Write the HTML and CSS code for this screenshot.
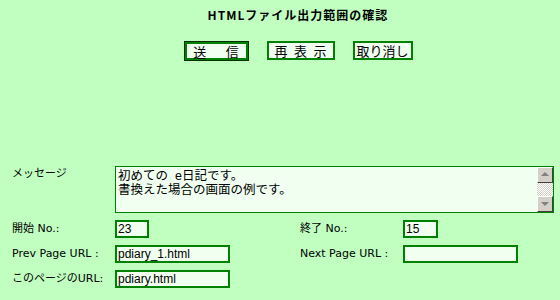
FILE: index.html
```html
<!DOCTYPE html>
<html lang="ja">
  <head>
    <meta charset="UTF-8" />
    <title>HTMLファイル出力範囲の確認</title>
    <link rel="stylesheet" href="styles.css">
  </head>
  <body>
    <div class="page">
      <h1 class="title">HTMLファイル出力範囲の確認</h1>

      <div class="buttons">
        <button class="btn btn-send">送&emsp;&ensp;信</button>
        <button class="btn btn-redraw">再&ensp;表&ensp;示</button>
        <button class="btn btn-cancel">取り消し</button>
      </div>
    </div>

    <form class="form">
      <label class="label label-top">メッセージ</label>
      <div class="memo">
        <textarea class="memo-text">初めての  e日記です。
書換えた場合の画面の例です。</textarea>
        <div class="scrollbar">
          <span class="sb-btn sb-up"></span>
          <span class="sb-track"></span>
          <span class="sb-btn sb-down"></span>
        </div>
      </div>

      <label class="label">開始 No.:</label>
      <div><input class="field field-num" value="23"></div>
      <label class="label">終了 No.:</label>
      <div><input class="field field-num2" value="15"></div>

      <label class="label">Prev Page URL :</label>
      <div><input class="field field-url" value="pdiary_1.html"></div>
      <label class="label">Next Page URL :</label>
      <div><input class="field field-url" value=""></div>

      <label class="label">このページのURL:</label>
      <div><input class="field field-url" value="pdiary.html"></div>
    </form>
  </body>
</html>
```

FILE: styles.css
```css
body {
  margin: 0;
  background: #c0ffc0;
  font-family: "Noto Sans CJK JP", "DejaVu Sans", sans-serif;
  font-size: 12px;
  color: #000;
}

.page {
  padding-left: 36px;
  text-align: center;
}

.title {
  margin: 0;
  padding-top: 6px;
  font-size: 12px;
  font-weight: bold;
  letter-spacing: 1px;
  line-height: 18px;
}

.buttons {
  display: flex;
  justify-content: center;
  align-items: flex-start;
  gap: 18px;
  margin-top: 17px;
}

.btn {
  height: 19px;
  padding: 0;
  background: #f0fff0;
  border: 2px solid #008000;
  font-family: inherit;
  font-size: 13px;
  line-height: 15px;
  color: #000;
}

.btn-send {
  width: 65px;
  height: 20px;
  border: 1px solid #003000;
  box-shadow: inset 0 0 0 2px #008000;
}

.btn-redraw {
  width: 68px;
}

.btn-cancel {
  width: 60px;
}

.form {
  display: grid;
  grid-template-columns: 103px 185px 103px 151px;
  row-gap: 6px;
  padding-left: 12px;
  margin-top: 105px;
}

.label {
  display: flex;
  align-items: center;
  font-family: "DejaVu Sans", "Noto Sans CJK JP", sans-serif;
  font-size: 11px;
  line-height: 14px;
}

.label-top {
  align-items: flex-start;
  padding-top: 1px;
}

.memo {
  grid-column: 2 / 5;
  display: flex;
  height: 47px;
  box-sizing: border-box;
  border: 1px solid #008000;
  background: #f0fff0;
}

.memo-text {
  flex: 1;
  border: none;
  outline: none;
  resize: none;
  margin: 0;
  padding: 2px 2px;
  background: transparent;
  font-family: "Liberation Sans", "Noto Sans CJK JP", sans-serif;
  font-size: 12.5px;
  line-height: 14px;
  overflow: hidden;
  color: #000;
}

.scrollbar {
  display: flex;
  flex-direction: column;
  width: 16px;
}

.sb-btn {
  position: relative;
  height: 16px;
  box-sizing: border-box;
  background: #d4d0c8;
  border: 1px solid;
  border-color: #fff #404040 #404040 #fff;
}

.sb-btn::after {
  content: "";
  position: absolute;
  left: 3px;
  top: 4px;
  border-left: 4px solid transparent;
  border-right: 4px solid transparent;
}

.sb-up::after {
  border-bottom: 4px solid #808080;
}

.sb-down::after {
  border-top: 4px solid #808080;
  top: 5px;
}

.sb-track {
  flex: 1;
  background: repeating-conic-gradient(#d4d0c8 0 25%, #ffffff 0 50%) 0 0 / 2px 2px;
}

.field {
  box-sizing: border-box;
  height: 18px;
  margin: 0;
  padding: 0 1px;
  border: 2px solid #008000;
  background: #f0fff0;
  font-family: "Liberation Sans", "Noto Sans CJK JP", sans-serif;
  font-size: 12px;
  color: #000;
  outline: none;
}

.field-num {
  width: 34px;
}

.field-num2 {
  width: 35px;
}

.field-url {
  width: 115px;
}
```
